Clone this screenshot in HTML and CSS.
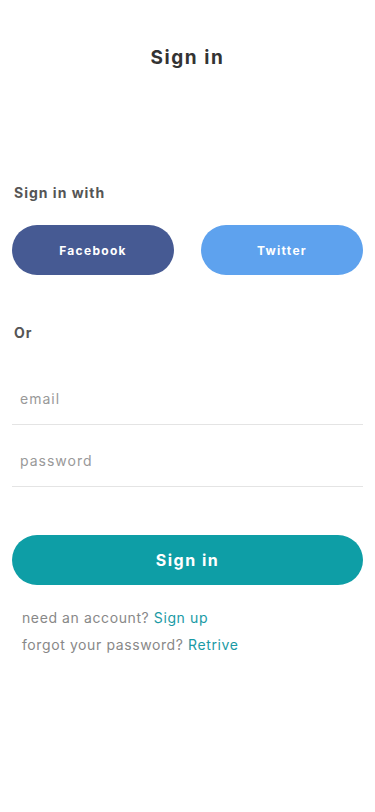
FILE: index.html
```html
<!DOCTYPE html>
<html>
<head>
    <title>Sign in</title>
    <link rel="stylesheet" href="styles.css">
</head>
<body>
    <div class="screen">
        <div class="header">Sign in</div>

        <div class="section-title social-title">Sign in with</div>
        <div class="social">
            <button class="btn-social facebook">Facebook</button>
            <button class="btn-social twitter">Twitter</button>
        </div>

        <div class="section-title or-title">Or</div>

        <form class="form">
            <input class="field" type="email" placeholder="email">
            <input class="field" type="password" placeholder="password">
            <button class="btn-submit" type="button">Sign in</button>
        </form>

        <div class="links">
            <div>need an account? <a href="#">Sign up</a></div>
            <div>forgot your password? <a href="#">Retrive</a></div>
        </div>
    </div>
</body>
</html>
```

FILE: styles.css
```css
body {
    margin: 0;
    font-family: Inter, "Noto Sans", Arial, sans-serif;
    background: #fff;
    color: #333;
}

.screen {
    padding: 0 12px;
}

.header {
    text-align: center;
    font-size: 19px;
    font-weight: 700;
    letter-spacing: 1.6px;
    color: #333;
    padding-top: 46px;
    height: 26px;
}

.section-title {
    font-size: 14px;
    font-weight: 700;
    letter-spacing: 1px;
    color: #555;
    padding-left: 2px;
}

.social-title {
    margin-top: 112px;
}

.social {
    display: flex;
    justify-content: space-between;
    margin-top: 24px;
}

.btn-social {
    width: 162px;
    height: 50px;
    border: none;
    border-radius: 25px;
    color: #fff;
    font-family: inherit;
    font-size: 12px;
    font-weight: 700;
    letter-spacing: 1.3px;
}

.facebook { background: #465a93; }
.twitter { background: #5ea2ee; }

.or-title {
    margin-top: 49px;
}

.form {
    display: flex;
    flex-direction: column;
    margin-top: 22px;
}

.field {
    box-sizing: border-box;
    border: none;
    border-bottom: 1px solid #e4e4e4;
    height: 62px;
    padding: 10px 8px 0;
    font-family: inherit;
    font-size: 14px;
    letter-spacing: 1px;
    outline: none;
}

.field::placeholder {
    color: #999;
}

.btn-submit {
    margin-top: 48px;
    height: 50px;
    border: none;
    border-radius: 25px;
    background: #0e9ea6;
    color: #fff;
    font-family: inherit;
    font-size: 16px;
    font-weight: 700;
    letter-spacing: 1.5px;
}

.links {
    margin-top: 19px;
    padding-left: 10px;
    font-size: 14px;
    letter-spacing: 0.6px;
    color: #888;
    line-height: 27px;
}

.links a {
    color: #1a9aa5;
    text-decoration: none;
}
```
